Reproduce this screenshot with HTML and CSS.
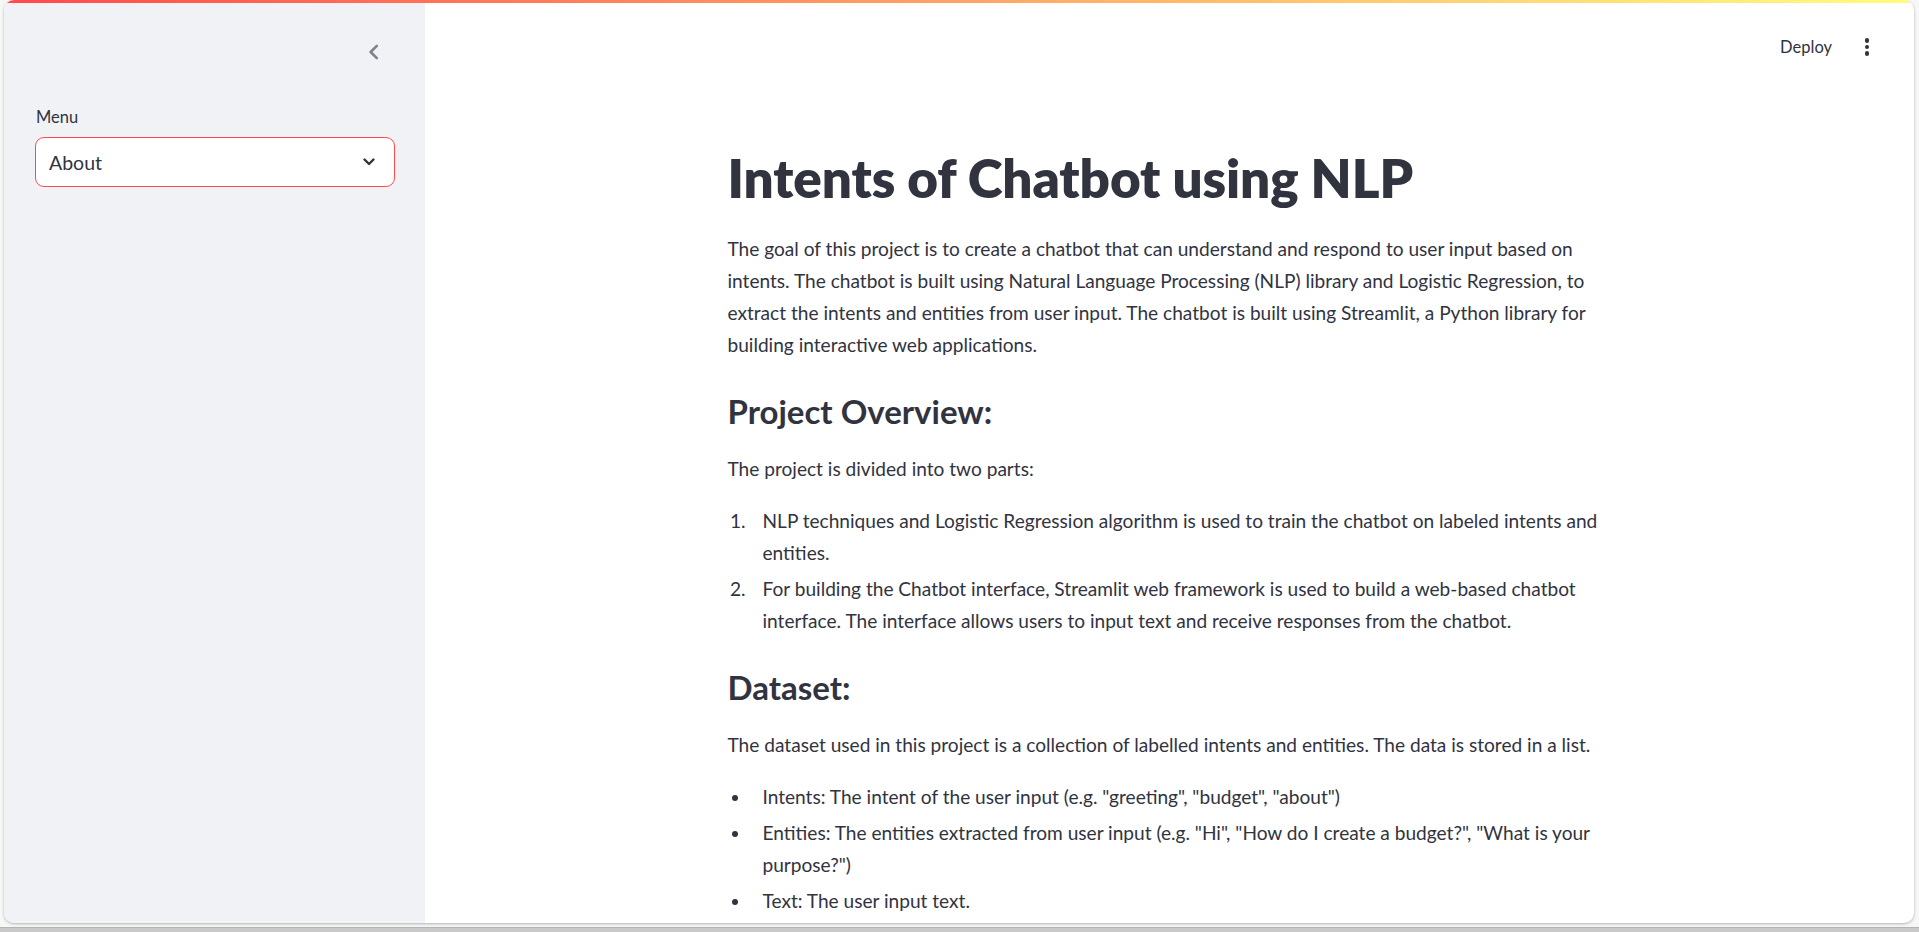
FILE: index.html
```html
<!DOCTYPE html>
<html lang="en">
<head>
<meta charset="utf-8">
<title>Intents of Chatbot using NLP</title>
<link rel="stylesheet" href="styles.css">
</head>
<body>
<div class="window">
  <div class="decoration"></div>
  <div class="app">
    <aside class="sidebar">
      <div class="sidebar-top">
        <button class="collapse" aria-label="Collapse sidebar">
          <svg width="18" height="18" viewBox="0 0 16 16"><polyline points="10.5,2.5 5,8 10.5,13.5" fill="none" stroke="#7f818c" stroke-width="2.3" stroke-linecap="round" stroke-linejoin="round"/></svg>
        </button>
      </div>
      <div class="field">
        <label class="field-label">Menu</label>
        <div class="select">
          <span class="select-value">About</span>
          <svg class="select-arrow" width="16" height="16" viewBox="0 0 16 16"><polyline points="3.5,5.5 8,10 12.5,5.5" fill="none" stroke="#31333f" stroke-width="2.4" stroke-linecap="round" stroke-linejoin="round"/></svg>
        </div>
      </div>
    </aside>
    <main class="main">
      <header class="toolbar">
        <span class="deploy">Deploy</span>
        <span class="kebab" aria-label="Main menu"><i></i><i></i><i></i></span>
      </header>
      <section class="content">
        <h1 class="title">Intents of Chatbot using NLP</h1>
        <p class="text">The goal of this project is to create a chatbot that can understand and respond to user input based on intents. The chatbot is built using Natural Language Processing (NLP) library and Logistic Regression, to extract the intents and entities from user input. The chatbot is built using Streamlit, a Python library for building interactive web applications.</p>
        <h3 class="subhead">Project Overview:</h3>
        <p class="text">The project is divided into two parts:</p>
        <ol class="list">
          <li>NLP techniques and Logistic Regression algorithm is used to train the chatbot on labeled intents and entities.</li>
          <li>For building the Chatbot interface, Streamlit web framework is used to build a web-based chatbot interface. The interface allows users to input text and receive responses from the chatbot.</li>
        </ol>
        <h3 class="subhead">Dataset:</h3>
        <p class="text">The dataset used in this project is a collection of labelled intents and entities. The data is stored in a list.</p>
        <ul class="list">
          <li>Intents: The intent of the user input (e.g. "greeting", "budget", "about")</li>
          <li>Entities: The entities extracted from user input (e.g. "Hi", "How do I create a budget?", "What is your purpose?")</li>
          <li>Text: The user input text.</li>
        </ul>
      </section>
    </main>
  </div>
</div>
<div class="taskbar"></div>
</body>
</html>
```

FILE: styles.css
```css
* { box-sizing: border-box; }
html, body {
  margin: 0;
  padding: 0;
  height: 932px;
  overflow: hidden;
  background: #f7f7f7;
  font-family: Lato, "Noto Sans", sans-serif;
  color: #31333f;
}
.window {
  margin-left: 4px;
  width: 1910px;
  height: 923px;
  border-radius: 10px;
  overflow: hidden;
  background: #ffffff;
  box-shadow: 0 1px 3px rgba(0,0,0,0.28);
  display: flex;
  flex-direction: column;
}
.decoration {
  height: 3px;
  flex: none;
  background: linear-gradient(90deg, #ff4b4b, #fffd80);
}
.app {
  flex: 1;
  display: flex;
  min-height: 0;
}
.sidebar {
  width: 421px;
  flex: none;
  background: #f0f2f6;
  padding: 0 30px 0 31px;
}
.sidebar-top {
  height: 102px;
  display: flex;
  justify-content: flex-end;
  padding-top: 36px;
  padding-right: 8px;
}
.collapse {
  width: 26px;
  height: 26px;
  padding: 4px;
  border: 0;
  background: transparent;
  display: flex;
  align-items: center;
  justify-content: center;
}
.field {
  display: flex;
  flex-direction: column;
}
.field-label {
  font-size: 16.5px;
  line-height: 24px;
  height: 32px;
  padding-left: 1px;
}
.select {
  height: 50px;
  border: 1px solid #ff4b4b;
  border-radius: 9px;
  background: #ffffff;
  display: flex;
  align-items: center;
  justify-content: space-between;
  padding: 0 17px 0 13px;
}
.select-value {
  font-size: 19.5px;
}
.main {
  flex: 1;
  display: flex;
  flex-direction: column;
  min-width: 0;
}
.toolbar {
  height: 88px;
  flex: none;
  display: flex;
  align-items: center;
  justify-content: flex-end;
  padding-right: 37px;
  gap: 25px;
}
.deploy {
  font-size: 16.5px;
}
.kebab {
  width: 20px;
  height: 20px;
  display: flex;
  flex-direction: column;
  align-items: center;
  justify-content: center;
  gap: 2px;
}
.kebab i {
  display: block;
  width: 4.4px;
  height: 4.4px;
  border-radius: 50%;
  background: #31333f;
}
.content {
  width: 884px;
  margin: 0 auto;
  padding-top: 54px;
}
.title {
  margin: 0 0 22px;
  font-size: 53px;
  line-height: 66px;
  font-weight: 800;
  letter-spacing: -0.1px;
}
.text {
  margin: 0;
  font-size: 19.1px;
  line-height: 32px;
}
.subhead {
  margin: 29px 0 21px;
  font-size: 33px;
  line-height: 42px;
  font-weight: 700;
}
.list {
  margin: 20px 0 0;
  padding: 0;
  font-size: 19.1px;
  line-height: 32px;
}
.list li {
  margin: 0 0 4px 23px;
  padding-left: 12px;
}
.taskbar {
  margin-top: 4px;
  height: 5px;
  background: #c9c9c9;
  border-top: 1px solid #b3b3b3;
}
```
